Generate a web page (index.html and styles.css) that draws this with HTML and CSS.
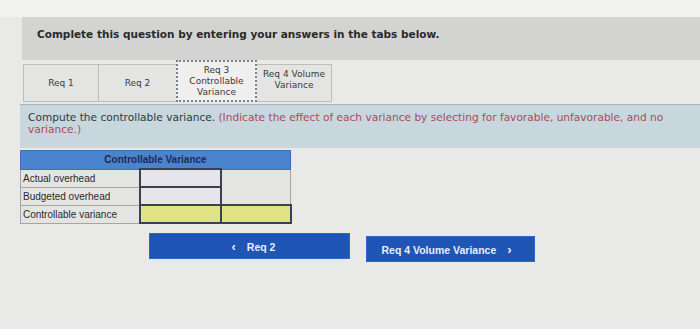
FILE: index.html
```html
<!DOCTYPE html>
<html lang="en">
<head>
    <meta charset="UTF-8">
    <title>Controllable Variance</title>
    <link rel="stylesheet" href="styles.css">
</head>
<body>
    <div class="page">
        <div class="banner">
            <h1>Complete this question by entering your answers in the tabs below.</h1>
        </div>

        <div class="tabs">
            <div class="tab">Req 1</div>
            <div class="tab">Req 2</div>
            <div class="tab active">Req 3<br>Controllable<br>Variance</div>
            <div class="tab">Req 4 Volume<br>Variance</div>
        </div>

        <div class="instructions">
            Compute the controllable variance. <span class="hint">(Indicate the effect of each variance by selecting for favorable, unfavorable, and no</span><br>
            <span class="hint">variance.)</span>
        </div>

        <table class="grid">
            <colgroup>
                <col class="col-label">
                <col class="col-input">
                <col class="col-blank">
            </colgroup>
            <tr>
                <th colspan="3">Controllable Variance</th>
            </tr>
            <tr>
                <td class="label">Actual overhead</td>
                <td class="input"></td>
                <td class="blank" rowspan="2"></td>
            </tr>
            <tr>
                <td class="label">Budgeted overhead</td>
                <td class="input"></td>
            </tr>
            <tr>
                <td class="label">Controllable variance</td>
                <td class="input yellow"></td>
                <td class="input yellow"></td>
            </tr>
        </table>

        <div class="nav">
            <button class="nav-btn prev"><span class="arrow">&lsaquo;</span> Req 2</button>
            <button class="nav-btn next">Req 4 Volume Variance <span class="arrow">&rsaquo;</span></button>
        </div>
    </div>
</body>
</html>
```

FILE: styles.css
```css
body {
    margin: 0;
    background-color: #ebebe9;
    font-family: "DejaVu Sans", Verdana, sans-serif;
    color: #333;
}
.page {
    padding-top: 17px;
    padding-left: 20px;
    height: 312px;
    background: linear-gradient(#f1f1ef 0, #f1f1ef 17px, #e9e9e7 17px);
}
.banner {
    background-color: #d3d3d1;
    height: 43px;
    margin-left: 2px;
    display: flex;
    align-items: center;
}
.banner h1 {
    margin: 0 0 9px 15px;
    font-size: 10.5px;
    font-weight: bold;
    color: #2a2a2a;
}
.tabs {
    display: flex;
    align-items: flex-end;
    height: 44px;
    margin-left: 3px;
}
.tab {
    width: 74px;
    height: 36px;
    margin-bottom: 2px;
    border: 1px solid #bdbdbb;
    border-right: none;
    background-color: #e4e4e2;
    display: flex;
    align-items: center;
    justify-content: center;
    text-align: center;
    font-size: 9px;
    line-height: 11px;
    color: #3a3a3a;
}
.tab:nth-child(2) {
    width: 77px;
}
.tab.active {
    width: 77px;
    height: 38px;
    margin-bottom: 2px;
    border: 2px dotted #7a7f8c;
    background-color: #efefed;
}
.tab:last-child {
    width: 74px;
    align-items: flex-start;
    padding-top: 4px;
    height: 32px;
    border-right: 1px solid #bdbdbb;
    border-left: none;
}
.instructions {
    background-color: #c7d7dd;
    border-top: 1px solid #a9b4b8;
    padding: 6px 8px 8px 8px;
    height: 29px;
    font-size: 10.6px;
    line-height: 12px;
    color: #2f3a40;
    white-space: nowrap;
}
.hint {
    color: #b0485c;
}
.grid {
    border-collapse: collapse;
    table-layout: fixed;
    width: 270px;
    margin-top: 2px;
    font-family: "Liberation Sans", Arial, sans-serif;
    font-size: 10px;
    background-color: #e4e4e2;
    border: 1px solid #8d8d8d;
}
.col-label {
    width: 119px;
}
.col-input {
    width: 81px;
}
.col-blank {
    width: 70px;
}
.grid th {
    background-color: #4a84cf;
    color: #1d2a55;
    height: 17px;
    padding: 0;
    font-size: 10px;
    font-weight: bold;
    border: 1px solid #4170b0;
    text-align: center;
}
.grid td {
    height: 16px;
    padding: 0 2px;
    border: 1px solid #a5a5a5;
}
.grid .label {
    color: #2b2b2b;
    white-space: nowrap;
}
.grid .input {
    border: 2px solid #3c4150;
    background-color: #e6e6ea;
}
.grid .blank {
    background-color: #e4e4e2;
}
.grid .yellow {
    background-color: #dfe383;
}
.nav {
    display: flex;
    margin-top: 9px;
    padding-left: 129px;
    gap: 16px;
}
.nav-btn {
    background-color: #1f55b4;
    color: #e8eefa;
    border: 1px solid #3366c4;
    font-family: "Liberation Sans", Arial, sans-serif;
    font-size: 10.5px;
    font-weight: bold;
    height: 26px;
    padding: 0;
}
.nav-btn.prev {
    width: 201px;
}
.nav-btn.next {
    width: 169px;
    margin-top: 3px;
}
.arrow {
    font-size: 13px;
    margin: 0 8px;
}
```
